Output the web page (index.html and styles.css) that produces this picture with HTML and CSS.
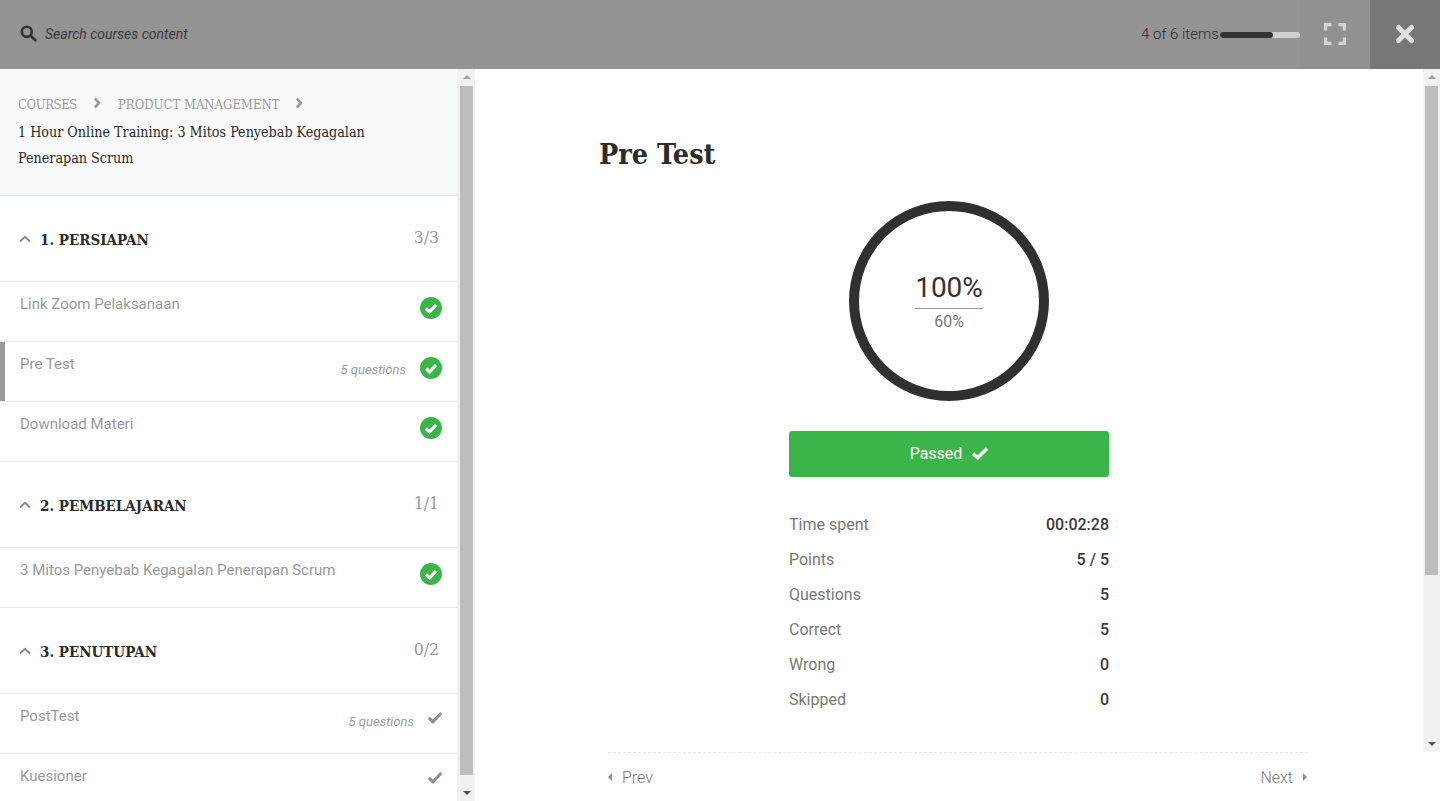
FILE: index.html
```html
<!DOCTYPE html>
<html lang="id">
<head>
<meta charset="utf-8">
<title>Pre Test</title>
<link rel="stylesheet" href="styles.css">
</head>
<body>
<header class="topbar">
  <div class="search">
    <svg class="search-icon" viewBox="0 0 18 18"><circle cx="7.2" cy="7.2" r="5.3"/><path d="M11.2 11.2l5 5"/></svg>
    <span class="search-text">Search courses content</span>
  </div>
  <div class="progress">
    <span class="progress-label">4 of 6 items</span>
    <span class="progress-track"><span class="progress-fill"></span></span>
  </div>
  <div class="fullscreen">
    <svg class="fullscreen-icon" viewBox="0 0 22 22"><path d="M1.500 7.500V1.500H7.500M14.500 1.500h6V7.500M20.500 14.500v6H14.500M7.500 20.500H1.500V14.500"/></svg>
  </div>
  <div class="close">
    <svg class="close-icon" viewBox="0 0 20 20"><path d="M3.500 3.500l13 13M16.500 3.500l-13 13"/></svg>
  </div>
</header>

<div class="workspace">
  <aside class="sidebar">
    <div class="sidebar-content">
      <div class="course-head">
        <div class="crumbs">
          <span class="crumb-short">COURSES</span>
          <svg class="crumb-arrow" viewBox="0 0 8 12"><path d="M1.800 1.500L6 6l-4.200 4.500"/></svg>
          <span>PRODUCT MANAGEMENT</span>
          <svg class="crumb-arrow" viewBox="0 0 8 12"><path d="M1.800 1.500L6 6l-4.200 4.500"/></svg>
        </div>
        <div class="course-title">1 Hour Online Training: 3 Mitos Penyebab Kegagalan Penerapan Scrum</div>
      </div>

      <section>
        <div class="section-head">
          <svg class="angle" viewBox="0 0 12 8"><path d="M1 6.500L6 1.800l5 4.700"/></svg>
          <h3 class="section-title">1. PERSIAPAN</h3>
          <span class="section-count">3/3</span>
        </div>
        <div class="row"><span class="row-name">Link Zoom Pelaksanaan</span>
          <svg class="done" viewBox="0 0 22 22"><circle cx="11" cy="11" r="11"/><path d="M6 11.500l3.600 3.400L16 8"/></svg></div>
        <div class="row row-active"><span class="row-name">Pre Test</span><span class="row-meta">5 questions</span>
          <svg class="done" viewBox="0 0 22 22"><circle cx="11" cy="11" r="11"/><path d="M6 11.500l3.600 3.400L16 8"/></svg></div>
        <div class="row"><span class="row-name">Download Materi</span>
          <svg class="done" viewBox="0 0 22 22"><circle cx="11" cy="11" r="11"/><path d="M6 11.500l3.600 3.400L16 8"/></svg></div>
      </section>

      <section>
        <div class="section-head">
          <svg class="angle" viewBox="0 0 12 8"><path d="M1 6.500L6 1.800l5 4.700"/></svg>
          <h3 class="section-title">2. PEMBELAJARAN</h3>
          <span class="section-count">1/1</span>
        </div>
        <div class="row"><span class="row-name">3 Mitos Penyebab Kegagalan Penerapan Scrum</span>
          <svg class="done" viewBox="0 0 22 22"><circle cx="11" cy="11" r="11"/><path d="M6 11.500l3.600 3.400L16 8"/></svg></div>
      </section>

      <section>
        <div class="section-head">
          <svg class="angle" viewBox="0 0 12 8"><path d="M1 6.500L6 1.800l5 4.700"/></svg>
          <h3 class="section-title">3. PENUTUPAN</h3>
          <span class="section-count">0/2</span>
        </div>
        <div class="row"><span class="row-name">PostTest</span><span class="row-meta row-meta-plain">5 questions</span>
          <svg class="todo" viewBox="0 0 16 13"><path d="M1.800 6.800l4.200 4L14.200 2"/></svg></div>
        <div class="row"><span class="row-name">Kuesioner</span>
          <svg class="todo" viewBox="0 0 16 13"><path d="M1.800 6.800l4.200 4L14.200 2"/></svg></div>
      </section>
    </div>
    <div class="scrollbar scrollbar-side">
      <span class="sb-up"></span>
      <span class="sb-thumb sb-thumb-side"></span>
      <span class="sb-down"></span>
    </div>
  </aside>

  <main class="main">
    <div class="main-scroll">
      <div class="quiz">
        <h1 class="quiz-title">Pre Test</h1>
        <div class="result">
          <div class="ring">
            <div class="ring-score">100%</div>
            <div class="ring-pass">60%</div>
          </div>
          <div class="passed">Passed
            <svg class="passed-check" viewBox="0 0 18 14"><path d="M2 7.500l4.800 4.300L16 2.500"/></svg>
          </div>
          <dl class="stats">
            <div class="stat"><dt>Time spent</dt><dd>00:02:28</dd></div>
            <div class="stat"><dt>Points</dt><dd>5 / 5</dd></div>
            <div class="stat"><dt>Questions</dt><dd>5</dd></div>
            <div class="stat"><dt>Correct</dt><dd>5</dd></div>
            <div class="stat"><dt>Wrong</dt><dd>0</dd></div>
            <div class="stat"><dt>Skipped</dt><dd>0</dd></div>
          </dl>
        </div>
      </div>
      <div class="scrollbar scrollbar-main">
        <span class="sb-up"></span>
        <span class="sb-thumb sb-thumb-main"></span>
        <span class="sb-down"></span>
      </div>
    </div>
    <footer class="pager">
      <div class="pager-inner">
        <span class="pager-link"><span class="tri-left"></span>Prev</span>
        <span class="pager-link pager-next">Next<span class="tri-right"></span></span>
      </div>
    </footer>
  </main>
</div>
</body>
</html>
```

FILE: styles.css
```css
* { box-sizing: border-box; }

html, body {
  margin: 0;
  height: 801px;
  overflow: hidden;
  background: #fff;
  font-family: Roboto, "Liberation Sans", sans-serif;
}

.topbar {
  display: flex;
  align-items: stretch;
  height: 69px;
  background: #949494;
}

.search {
  flex: 1;
  display: flex;
  align-items: center;
  gap: 8px;
  padding: 0 0 2px 20px;
}

.search-icon {
  width: 17px;
  height: 17px;
  fill: none;
  stroke: #333;
  stroke-width: 2.800;
  stroke-linecap: round;
}

.search-text {
  font-size: 14px;
  font-style: italic;
  color: #3a3a3a;
}

.progress {
  display: flex;
  align-items: center;
  width: 159px;
  padding-bottom: 2px;
}

.progress-label {
  font-size: 15px;
  font-weight: 300;
  color: #2a2a2a;
  white-space: nowrap;
}

.progress-track {
  width: 80px;
  height: 6px;
  margin-left: 1px;
  border-radius: 3px;
  background: #d0d0d0;
  flex: none;
  position: relative;
  top: 1px;
}

.progress-fill {
  display: block;
  width: 53px;
  height: 6px;
  border-radius: 3px;
  background: #333;
}

.fullscreen {
  width: 70px;
  display: flex;
  align-items: center;
  justify-content: center;
  padding-bottom: 1px;
  background: #919191;
}

.fullscreen-icon {
  width: 22px;
  height: 22px;
  fill: none;
  stroke: #d5d5d5;
  stroke-width: 3.400;
}

.close {
  width: 70px;
  display: flex;
  align-items: center;
  justify-content: center;
  padding-bottom: 1px;
  background: #777;
}

.close-icon {
  width: 20px;
  height: 20px;
  fill: none;
  stroke: #e0e0e0;
  stroke-width: 5;
  stroke-linecap: round;
}

.workspace {
  display: flex;
  height: 732px;
}

.sidebar {
  width: 475px;
  flex: none;
  display: flex;
  overflow: hidden;
}

.sidebar-content {
  width: 457px;
  flex: none;
}

.course-head {
  height: 127px;
  padding: 24px 50px 0 18px;
  background: #f8f9f9;
  border-bottom: 1px solid #e9e9e9;
  font-family: "DejaVu Serif Condensed", "DejaVu Serif", serif;
}

.crumbs {
  display: flex;
  align-items: center;
  height: 22px;
  font-size: 13px;
  color: #9a9a9a;
}

.crumb-short {
  letter-spacing: -0.4px;
}

.crumb-arrow {
  width: 8px;
  height: 12px;
  margin: -2px 17px 0 16px;
  fill: none;
  stroke: #9a9a9a;
  stroke-width: 2.600;
}

.course-title {
  margin-top: 4px;
  font-size: 14.200px;
  line-height: 26px;
  color: #2a2a2a;
}

.section-head {
  display: flex;
  align-items: center;
  height: 86px;
  padding: 0 18px 0 19px;
  border-bottom: 1px solid #e9e9e9;
}

.angle {
  width: 12px;
  height: 8px;
  margin-right: 9px;
  fill: none;
  stroke: #8a8a8a;
  stroke-width: 2;
}

.section-title {
  flex: 1;
  margin: 0;
  position: relative;
  top: 1px;
  font-family: "DejaVu Serif Condensed", "DejaVu Serif", serif;
  font-size: 15px;
  font-weight: 700;
  color: #2a2a2a;
}

.section-count {
  position: relative;
  top: -2px;
  font-family: "DejaVu Serif Condensed", "DejaVu Serif", serif;
  font-size: 17.500px;
  color: #999;
}

.row {
  display: flex;
  align-items: flex-start;
  height: 60px;
  padding: 13px 15px 0 20px;
  border-bottom: 1px solid #e9e9e9;
  position: relative;
}

.row-active::before {
  content: "";
  position: absolute;
  left: 0;
  top: 0;
  bottom: 0;
  width: 5px;
  background: #9a9a9a;
}

.row-name {
  flex: 1;
  font-size: 15px;
  line-height: 18px;
  color: #999;
}

.row-meta {
  margin: 8px 14px 0 0;
  font-size: 13px;
  line-height: 14px;
  font-style: italic;
  color: #9a9a9a;
}

.row-meta-plain {
  margin-right: 13px;
}

.done {
  width: 22px;
  height: 22px;
  margin: 2px 0 0;
  flex: none;
  fill: #3bb54a;
  stroke: none;
}

.done path {
  fill: none;
  stroke: #fff;
  stroke-width: 3.200;
}

.todo {
  width: 16px;
  height: 13px;
  margin: 4px -1px 0 0;
  flex: none;
  fill: none;
  stroke: #8f8f8f;
  stroke-width: 3;
}

.scrollbar {
  position: relative;
  flex: none;
  background: #f1f1f1;
}

.scrollbar-side {
  width: 18px;
  height: 732px;
}

.scrollbar-main {
  width: 17px;
  height: 683px;
}

.sb-thumb {
  position: absolute;
  left: 3px;
  width: 13px;
  background: #bdbdbd;
}

.scrollbar-main .sb-thumb {
  left: 2px;
}

.sb-thumb-side {
  top: 17px;
  height: 689px;
}

.sb-thumb-main {
  top: 17px;
  height: 489px;
}

.sb-up,
.sb-down {
  position: absolute;
  left: 50%;
  margin-left: -4px;
  border-left: 4px solid transparent;
  border-right: 4px solid transparent;
}

.scrollbar-side .sb-up,
.scrollbar-side .sb-down {
  margin-left: -3px;
}

.sb-up {
  top: 6px;
  border-bottom: 4px solid #a3a3a3;
}

.sb-down {
  bottom: 6px;
  border-top: 4px solid #505050;
}

.main {
  flex: 1;
  display: flex;
  flex-direction: column;
}

.main-scroll {
  display: flex;
  height: 683px;
}

.quiz {
  flex: 1;
  padding: 65px 124px 0;
}

.quiz-title {
  margin: 0;
  height: 40px;
  font-family: "DejaVu Serif Condensed", "DejaVu Serif", serif;
  font-size: 28.500px;
  line-height: 40px;
  font-weight: 700;
  color: #2c2c2c;
}

.result {
  width: 320px;
  margin: 27px auto 0;
}

.ring {
  width: 200px;
  height: 200px;
  margin: 0 auto;
  border: 10px solid #303030;
  border-radius: 50%;
  display: flex;
  flex-direction: column;
  align-items: center;
  padding-top: 58px;
}

.ring-score {
  width: 68px;
  height: 40px;
  border-bottom: 1px solid #999;
  text-align: center;
  font-size: 28px;
  line-height: 38px;
  color: #333;
}

.ring-pass {
  margin-top: 3px;
  font-size: 16px;
  line-height: 20px;
  color: #777;
}

.passed {
  display: flex;
  align-items: center;
  justify-content: center;
  gap: 9px;
  height: 46px;
  margin-top: 30px;
  padding: 0 0 2px 1px;
  border-radius: 3px;
  background: #3bb54a;
  color: #fff;
  font-size: 16px;
}

.passed-check {
  width: 18px;
  height: 14px;
  fill: none;
  stroke: #fff;
  stroke-width: 3.400;
}

.stats {
  margin: 30px 0 0;
}

.stat {
  display: flex;
  justify-content: space-between;
  height: 35px;
  font-size: 16px;
  line-height: 35px;
}

.stat dt {
  color: #777;
}

.stat dd {
  margin: 0;
  color: #3a3a3a;
  font-weight: 500;
}

.pager {
  height: 49px;
  padding-left: 133px;
}

.pager-inner {
  width: 700px;
  height: 49px;
  display: flex;
  justify-content: space-between;
  align-items: center;
  border-top: 1px dashed #e5e5e5;
}

.pager-link {
  display: flex;
  align-items: center;
  font-size: 16px;
  font-weight: 300;
  color: #777;
}

.pager-next {
  margin-right: 1px;
}

.tri-left,
.tri-right {
  width: 0;
  height: 0;
  border-top: 4px solid transparent;
  border-bottom: 4px solid transparent;
}

.tri-left {
  margin-right: 10px;
  border-right: 4px solid #8a8a8a;
}

.tri-right {
  margin-left: 10px;
  border-left: 4px solid #8a8a8a;
}
```
